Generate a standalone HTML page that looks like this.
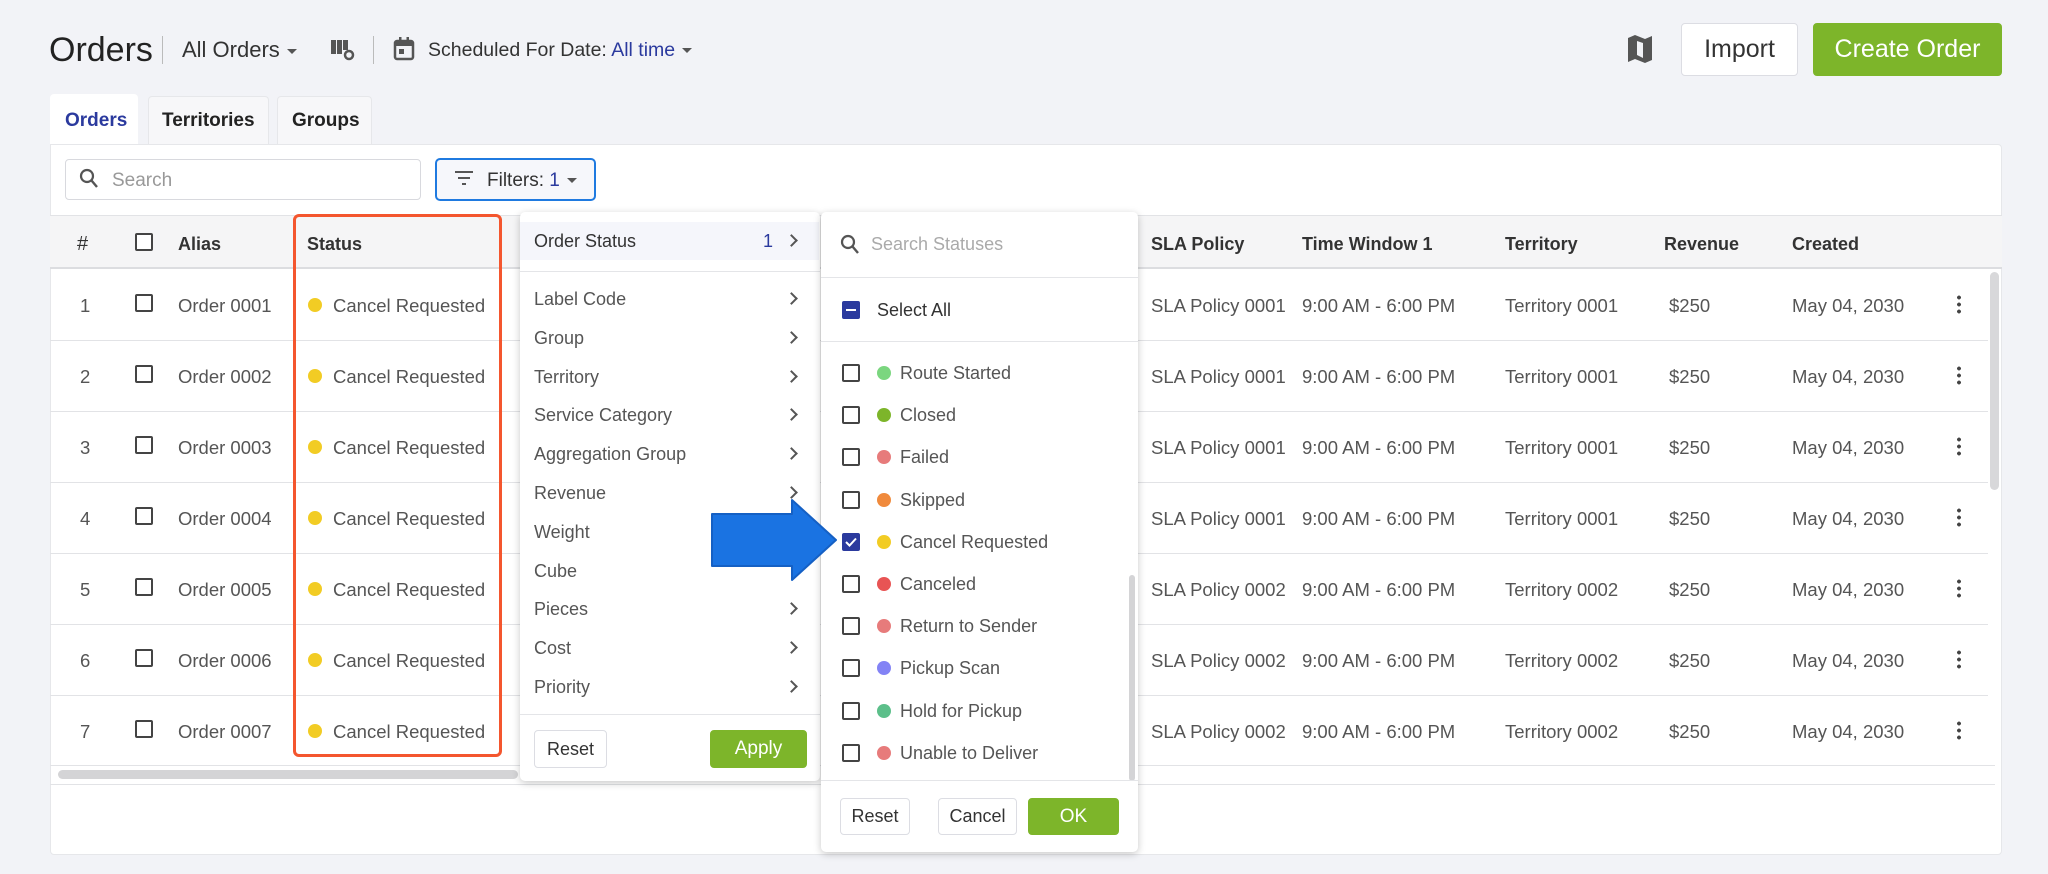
<!DOCTYPE html>
<html><head><meta charset="utf-8"><style>
*{box-sizing:border-box;margin:0;padding:0}
body{width:2048px;height:874px;background:#f2f3f7;font-family:"Liberation Sans",Arial,sans-serif;position:relative;overflow:hidden;color:#444}
.a{position:absolute}
.t{white-space:nowrap}
.cb{position:absolute;width:18px;height:18px;border:2px solid #444;border-radius:2px;background:#fff}
.dot{position:absolute;width:14px;height:14px;border-radius:50%}
.btn{position:absolute;border:1px solid #dcdde3;border-radius:4px;background:#fff;display:flex;align-items:center;justify-content:center;color:#333;font-size:18px}
.green{background:#7db52a;border-color:#7db52a;color:#fff}
.chev{position:absolute;width:9px;height:9px;border-right:2px solid #555;border-top:2px solid #555;transform:rotate(45deg)}
.rowline{position:absolute;left:50px;width:1945px;height:1px;background:#e2e3e6}
.cell{position:absolute;font-size:18.5px;color:#555;white-space:nowrap;line-height:22px}
.hd{position:absolute;font-size:18px;color:#333;font-weight:bold;white-space:nowrap;line-height:22px}
.mi{position:absolute;left:534px;font-size:18px;color:#555;white-space:nowrap}
.si{position:absolute;left:900px;font-size:18px;color:#555;white-space:nowrap}
.car{display:inline-block;vertical-align:middle;margin-left:7px;border-left:5px solid transparent;border-right:5px solid transparent;border-top:5px solid #555}
</style></head><body>

<!-- header -->
<div class="a t" style="left:49px;top:31px;font-size:34px;color:#222">Orders</div>
<div class="a" style="left:162px;top:36px;width:1px;height:28px;background:#bbb"></div>
<div class="a t" style="left:182px;top:37px;font-size:22px;color:#333">All Orders<span class="car"></span></div>
<svg class="a" style="left:331px;top:38px" width="26" height="24" viewBox="0 0 26 24"><rect x="0" y="2" width="5" height="14" fill="#555"/><rect x="6" y="2" width="5" height="14" fill="#555"/><rect x="12" y="2" width="5" height="10" fill="#555"/><circle cx="18" cy="17" r="4" fill="none" stroke="#555" stroke-width="2.5"/></svg>
<div class="a" style="left:373px;top:36px;width:1px;height:28px;background:#bbb"></div>
<svg class="a" style="left:393px;top:36px" width="22" height="26" viewBox="0 0 22 26"><rect x="2" y="5" width="18" height="18" rx="2" fill="none" stroke="#555" stroke-width="2.5"/><rect x="2" y="5" width="18" height="5" fill="#555"/><rect x="6" y="1" width="2.5" height="6" fill="#555"/><rect x="13.5" y="1" width="2.5" height="6" fill="#555"/><rect x="6" y="13" width="5" height="5" fill="#555"/></svg>
<div class="a t" style="left:428px;top:39px;font-size:19.5px;color:#333">Scheduled For Date: <span style="color:#2b3a9e">All time</span><span class="car"></span></div>

<svg class="a" style="left:1626px;top:34px" width="28" height="30" viewBox="0 0 28 30"><path d="M2 4 L9 1 L19 5 L26 2 L26 26 L19 29 L9 25 L2 28 Z" fill="#555"/><path d="M11 7 L17 9 L17 24 L11 21 Z" fill="#f2f3f7"/></svg>
<div class="btn" style="left:1681px;top:23px;width:117px;height:53px;font-size:25px;color:#333">Import</div>
<div class="btn green" style="left:1813px;top:23px;width:189px;height:53px;font-size:25px">Create Order</div>

<!-- tabs -->
<div class="a" style="left:50px;top:94px;width:88px;height:52px;background:#fff;border-radius:4px 4px 0 0"></div>
<div class="a t" style="left:65px;top:110px;font-size:19px;color:#2b3a9e;font-weight:bold">Orders</div>
<div class="a" style="left:148px;top:96px;width:121px;height:48px;background:#f7f7f9;border:1px solid #e6e7ea;border-bottom:none;border-radius:4px 4px 0 0"></div>
<div class="a t" style="left:162px;top:110px;font-size:19px;color:#222;font-weight:bold">Territories</div>
<div class="a" style="left:277px;top:96px;width:95px;height:48px;background:#f7f7f9;border:1px solid #e6e7ea;border-bottom:none;border-radius:4px 4px 0 0"></div>
<div class="a t" style="left:292px;top:110px;font-size:19px;color:#222;font-weight:bold">Groups</div>

<!-- card -->
<div class="a" style="left:50px;top:144px;width:1952px;height:711px;background:#fff;border:1px solid #e6e7ea;border-radius:0 4px 4px 4px"></div>
<div class="a" style="left:65px;top:159px;width:356px;height:41px;border:1px solid #d8d9de;border-radius:4px"></div>
<svg class="a" style="left:79px;top:168px" width="20" height="22" viewBox="0 0 20 22"><circle cx="8" cy="8" r="6" fill="none" stroke="#555" stroke-width="2.2"/><path d="M12.5 12.5 L18 19" stroke="#555" stroke-width="2.4"/></svg>
<div class="a t" style="left:112px;top:170px;font-size:19px;color:#999">Search</div>
<div class="a" style="left:435px;top:158px;width:161px;height:43px;border:2px solid #1f7ae0;border-radius:5px;background:#f6f7fb"></div>
<svg class="a" style="left:454px;top:170px" width="20" height="16" viewBox="0 0 20 16"><path d="M1 2H19M4 8H16M8 14H12" stroke="#555" stroke-width="2"/></svg>
<div class="a t" style="left:487px;top:170px;font-size:19px;color:#333">Filters: <span style="color:#2b3a9e">1</span><span class="car"></span></div>

<!-- table header -->
<div class="a" style="left:50px;top:215px;width:1952px;height:54px;background:#f5f5f6;border-top:1px solid #e2e3e6;border-bottom:2px solid #dcdde0"></div>
<div class="hd" style="left:77px;top:233px;font-weight:normal;font-size:20px">#</div>
<div class="cb" style="left:135px;top:233px"></div>
<div class="hd" style="left:178px;top:233px">Alias</div>
<div class="hd" style="left:307px;top:233px">Status</div>
<div class="hd" style="left:1151px;top:233px">SLA Policy</div>
<div class="hd" style="left:1302px;top:233px">Time Window 1</div>
<div class="hd" style="left:1505px;top:233px">Territory</div>
<div class="hd" style="left:1664px;top:233px">Revenue</div>
<div class="hd" style="left:1792px;top:233px">Created</div>

<!-- rows -->
<div id="rows"></div>
<script>
var h='';var pol=['0001','0001','0001','0001','0002','0002','0002'],ter=pol;
for(var i=0;i<7;i++){var c=304+i*71,t=c-9;
h+='<div class="cell" style="left:80px;top:'+t+'px">'+(i+1)+'</div>';
h+='<div class="cb" style="left:135px;top:'+(c-10)+'px"></div>';
h+='<div class="cell" style="left:178px;top:'+t+'px">Order 000'+(i+1)+'</div>';
h+='<div class="dot" style="left:308px;top:'+(c-6)+'px;background:#f2cc24"></div>';
h+='<div class="cell" style="left:333px;top:'+t+'px">Cancel Requested</div>';
h+='<div class="cell" style="left:1151px;top:'+t+'px">SLA Policy '+pol[i]+'</div>';
h+='<div class="cell" style="left:1302px;top:'+t+'px">9:00 AM - 6:00 PM</div>';
h+='<div class="cell" style="left:1505px;top:'+t+'px">Territory '+ter[i]+'</div>';
h+='<div class="cell" style="left:1669px;top:'+t+'px">$250</div>';
h+='<div class="cell" style="left:1792px;top:'+t+'px">May 04, 2030</div>';
h+='<div class="a" style="left:1957px;top:'+(c-10)+'px;width:4px;height:20px;background:radial-gradient(circle,#444 1.8px,transparent 2px) 0 0/4px 7px"></div>';
if(i<6)h+='<div class="rowline" style="top:'+(c+36)+'px;width:1938px"></div>';}
document.getElementById('rows').innerHTML=h;
</script>
<div class="rowline" style="top:765px"></div>
<div class="a" style="left:58px;top:770px;width:460px;height:9px;border-radius:5px;background:#d4d4d6"></div>
<div class="rowline" style="top:784px"></div>
<div class="a" style="left:1990px;top:272px;width:9px;height:218px;border-radius:5px;background:#d8d8da"></div>

<!-- red box -->
<div class="a" style="left:293px;top:214px;width:209px;height:543px;border:3px solid #f4562e;border-radius:6px"></div>

<!-- dropdown 1 -->
<div class="a" style="left:520px;top:212px;width:300px;height:569px;background:#fff;border-radius:5px;box-shadow:0 2px 8px rgba(0,0,0,.22)"></div>
<div class="a" style="left:520px;top:222px;width:299px;height:38px;background:#f5f6fb"></div>
<div class="mi" style="top:231px;color:#333">Order Status</div>
<div class="a t" style="left:763px;top:231px;font-size:18px;color:#2b3a9e">1</div>
<div class="chev" style="left:787px;top:236px"></div>
<div class="a" style="left:520px;top:271px;width:300px;height:1px;background:#e4e5e8"></div>
<div id="m1"></div>
<script>
var it=['Label Code','Group','Territory','Service Category','Aggregation Group','Revenue','Weight','Cube','Pieces','Cost','Priority'],h='';
for(var i=0;i<it.length;i++){var c=299+i*38.8;
h+='<div class="mi" style="top:'+(c-10)+'px">'+it[i]+'</div>';
if(i<6||i>7)h+='<div class="chev" style="left:787px;top:'+(c-5)+'px"></div>';}
document.getElementById('m1').innerHTML=h;
</script>
<div class="a" style="left:520px;top:714px;width:300px;height:1px;background:#e4e5e8"></div>
<div class="btn" style="left:534px;top:730px;width:73px;height:38px">Reset</div>
<div class="btn green" style="left:710px;top:730px;width:97px;height:38px;font-size:19px">Apply</div>

<!-- dropdown 2 -->
<div class="a" style="left:821px;top:212px;width:317px;height:640px;background:#fff;border-radius:5px;box-shadow:0 2px 8px rgba(0,0,0,.22)"></div>
<svg class="a" style="left:840px;top:234px" width="20" height="22" viewBox="0 0 20 22"><circle cx="8" cy="8" r="6" fill="none" stroke="#555" stroke-width="2.2"/><path d="M12.5 12.5 L18 19" stroke="#555" stroke-width="2.4"/></svg>
<div class="a t" style="left:871px;top:234px;font-size:18px;color:#aaa">Search Statuses</div>
<div class="a" style="left:821px;top:277px;width:317px;height:1px;background:#e4e5e8"></div>
<div class="a" style="left:842px;top:301px;width:18px;height:18px;background:#2b3a9e;border-radius:2px"></div>
<div class="a" style="left:846px;top:309px;width:10px;height:2px;background:#fff"></div>
<div class="a t" style="left:877px;top:300px;font-size:18px;color:#333">Select All</div>
<div class="a" style="left:821px;top:341px;width:317px;height:1px;background:#e4e5e8"></div>
<div id="m2"></div>
<script>
var st=[['Route Started','#7bd67f'],['Closed','#7db52a'],['Failed','#e77b7b'],['Skipped','#f08a3c'],['Cancel Requested','#f2cc24'],['Canceled','#e85454'],['Return to Sender','#e77b7b'],['Pickup Scan','#8383f5'],['Hold for Pickup','#5cbf8a'],['Unable to Deliver','#e77b7b']],h='';
for(var i=0;i<st.length;i++){var c=373+i*42.2;
if(i==4){h+='<div class="a" style="left:842px;top:'+(c-9)+'px;width:18px;height:18px;background:#2b3a9e;border-radius:2px"></div><svg class="a" style="left:844px;top:'+(c-7)+'px" width="14" height="14" viewBox="0 0 14 14"><path d="M2 7 L5.5 10.5 L12 3.5" stroke="#fff" stroke-width="2" fill="none"/></svg>';}
else h+='<div class="cb" style="left:842px;top:'+(c-9)+'px"></div>';
h+='<div class="dot" style="left:877px;top:'+(c-7)+'px;background:'+st[i][1]+'"></div>';
h+='<div class="si" style="top:'+(c-10)+'px">'+st[i][0]+'</div>';}
document.getElementById('m2').innerHTML=h;
</script>
<div class="a" style="left:1129px;top:575px;width:6px;height:206px;border-radius:3px;background:#d4d4d6"></div>
<div class="a" style="left:821px;top:780px;width:317px;height:1px;background:#e4e5e8"></div>
<div class="btn" style="left:840px;top:798px;width:70px;height:37px">Reset</div>
<div class="btn" style="left:938px;top:798px;width:79px;height:37px">Cancel</div>
<div class="btn green" style="left:1028px;top:798px;width:91px;height:37px;font-size:19px">OK</div>

<!-- arrow -->
<svg class="a" style="left:708px;top:498px" width="132" height="84" viewBox="0 0 132 84"><path d="M4 16 H84 V2 L128 42 L84 82 V68 H4 Z" fill="#1a73e2" stroke="#1560c4" stroke-width="2" stroke-linejoin="round"/></svg>
</body></html>
